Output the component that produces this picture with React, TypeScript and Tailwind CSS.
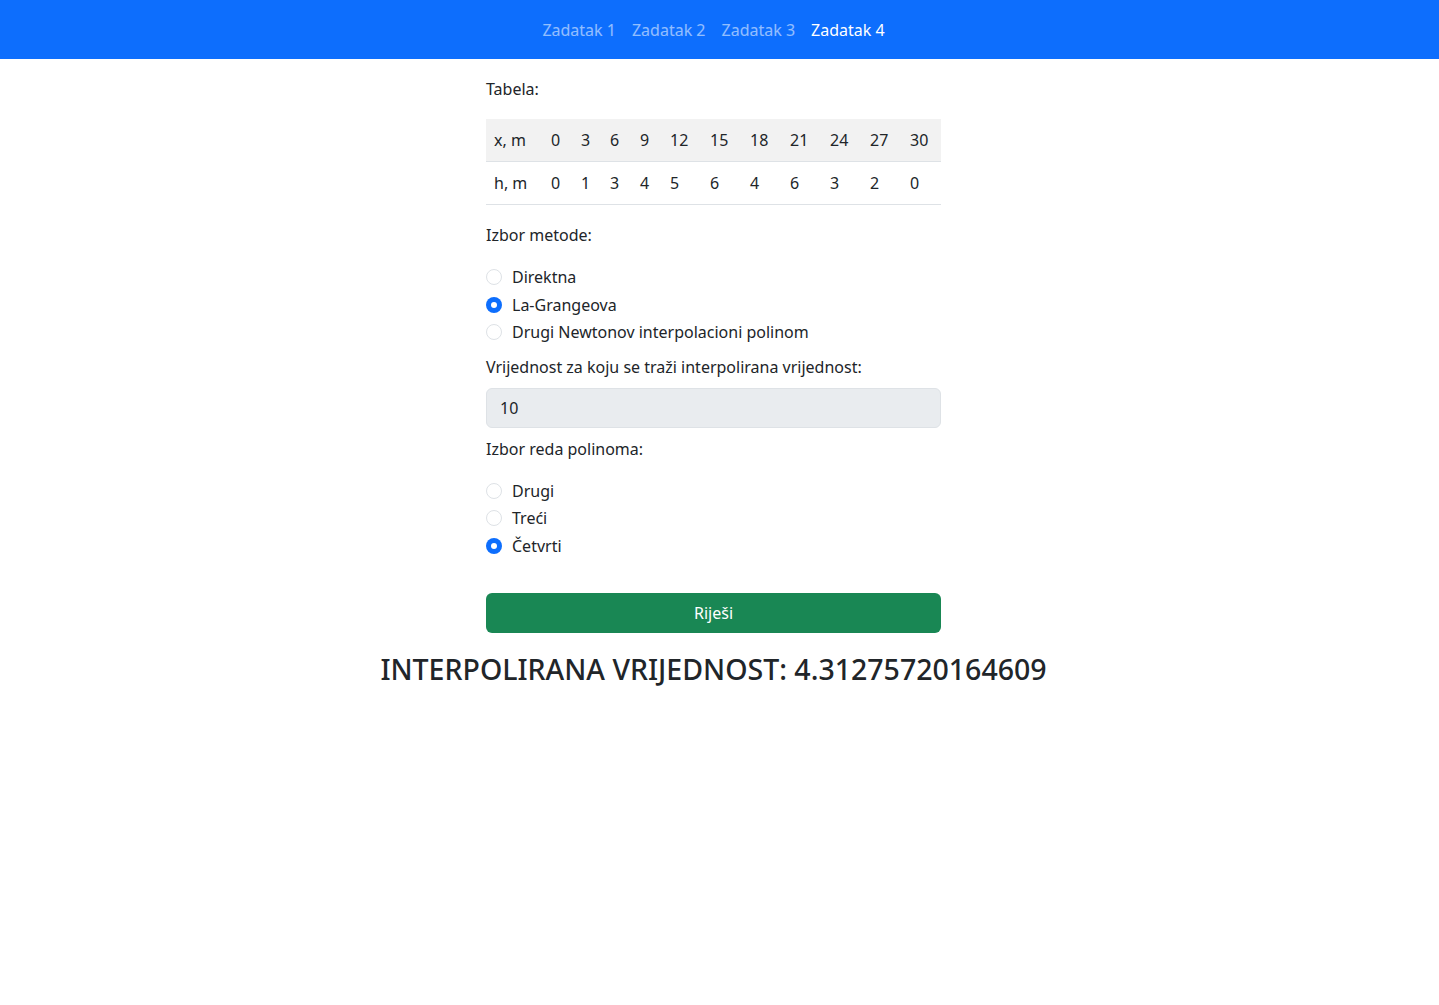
import { useState } from 'react'

const xs = ['0', '3', '6', '9', '12', '15', '18', '21', '24', '27', '30']
const hs = ['0', '1', '3', '4', '5', '6', '4', '6', '3', '2', '0']
const colW = ['w-[30px]', 'w-[29px]', 'w-[30px]', 'w-[30px]', 'w-[40px]', 'w-[40px]', 'w-[40px]', 'w-[40px]', 'w-[40px]', 'w-[40px]', 'w-[39px]']

function Radio({ label, checked, onChange }: { label: string; checked: boolean; onChange: () => void }) {
  return (
    <label className="flex items-center h-[27.5px] cursor-pointer" onClick={onChange}>
      {checked ? (
        <span className="w-4 h-4 rounded-full bg-[#0d6efd] flex items-center justify-center shrink-0">
          <span className="w-[6px] h-[6px] rounded-full bg-white" />
        </span>
      ) : (
        <span className="w-4 h-4 rounded-full border border-[#dee2e6] bg-white shrink-0" />
      )}
      <span className="ml-[10px]">{label}</span>
    </label>
  )
}

export default function App() {
  const [method, setMethod] = useState(1)
  const [order, setOrder] = useState(2)
  const tabs = ['Zadatak 1', 'Zadatak 2', 'Zadatak 3', 'Zadatak 4']

  return (
    <div className="min-h-screen bg-white text-[#212529] text-[16px] font-['Noto_Sans',sans-serif]">
      <nav className="h-[59px] bg-[#0d6efd] flex items-center">
        <div className="w-[1427px] flex justify-center">
          {tabs.map((t, i) => (
            <a key={t} className={`px-2 text-[16px] ${i === 3 ? 'text-white' : 'text-white/55'}`}>
              {t}
            </a>
          ))}
        </div>
      </nav>

      <div className="w-[1427px]">
        <div className="w-[455px] mx-auto pt-[18px]">
          <p className="leading-6">Tabela:</p>

          <table className="mt-[18px] w-full border-collapse table-fixed">
            <tbody>
              <tr className="bg-[#f2f2f2] border-b border-[#dee2e6]">
                <td className="w-[57px] h-[42px] px-2">x, m</td>
                {xs.map((v, i) => (
                  <td key={i} className={`${colW[i]} pl-2`}>{v}</td>
                ))}
              </tr>
              <tr className="border-b border-[#dee2e6]">
                <td className="h-[43px] px-2 pt-[1px]">h, m</td>
                {hs.map((v, i) => (
                  <td key={i} className="pl-2 pt-[1px]">{v}</td>
                ))}
              </tr>
            </tbody>
          </table>

          <p className="mt-[18px] leading-6">Izbor metode:</p>
          <div className="mt-[17px]">
            {['Direktna', 'La-Grangeova', 'Drugi Newtonov interpolacioni polinom'].map((l, i) => (
              <Radio key={l} label={l} checked={method === i} onChange={() => setMethod(i)} />
            ))}
          </div>

          <p className="mt-[9px] leading-6">Vrijednost za koju se traži interpolirana vrijednost:</p>
          <div className="mt-[9px] h-[40px] rounded-[6px] border border-[#dee2e6] bg-[#e9ecef] flex items-center px-[13px]">
            10
          </div>

          <p className="mt-[9px] leading-6">Izbor reda polinoma:</p>
          <div className="mt-[16px]">
            {['Drugi', 'Treći', 'Četvrti'].map((l, i) => (
              <Radio key={l} label={l} checked={order === i} onChange={() => setOrder(i)} />
            ))}
          </div>

          <button className="mt-[33px] w-full h-[40px] rounded-[6px] bg-[#198754] text-white">
            Riješi
          </button>
        </div>

        <h2 className="text-center text-[28.5px] font-medium mt-[19px] leading-[1.2]">
          INTERPOLIRANA VRIJEDNOST: 4.31275720164609
        </h2>
      </div>
    </div>
  )
}
